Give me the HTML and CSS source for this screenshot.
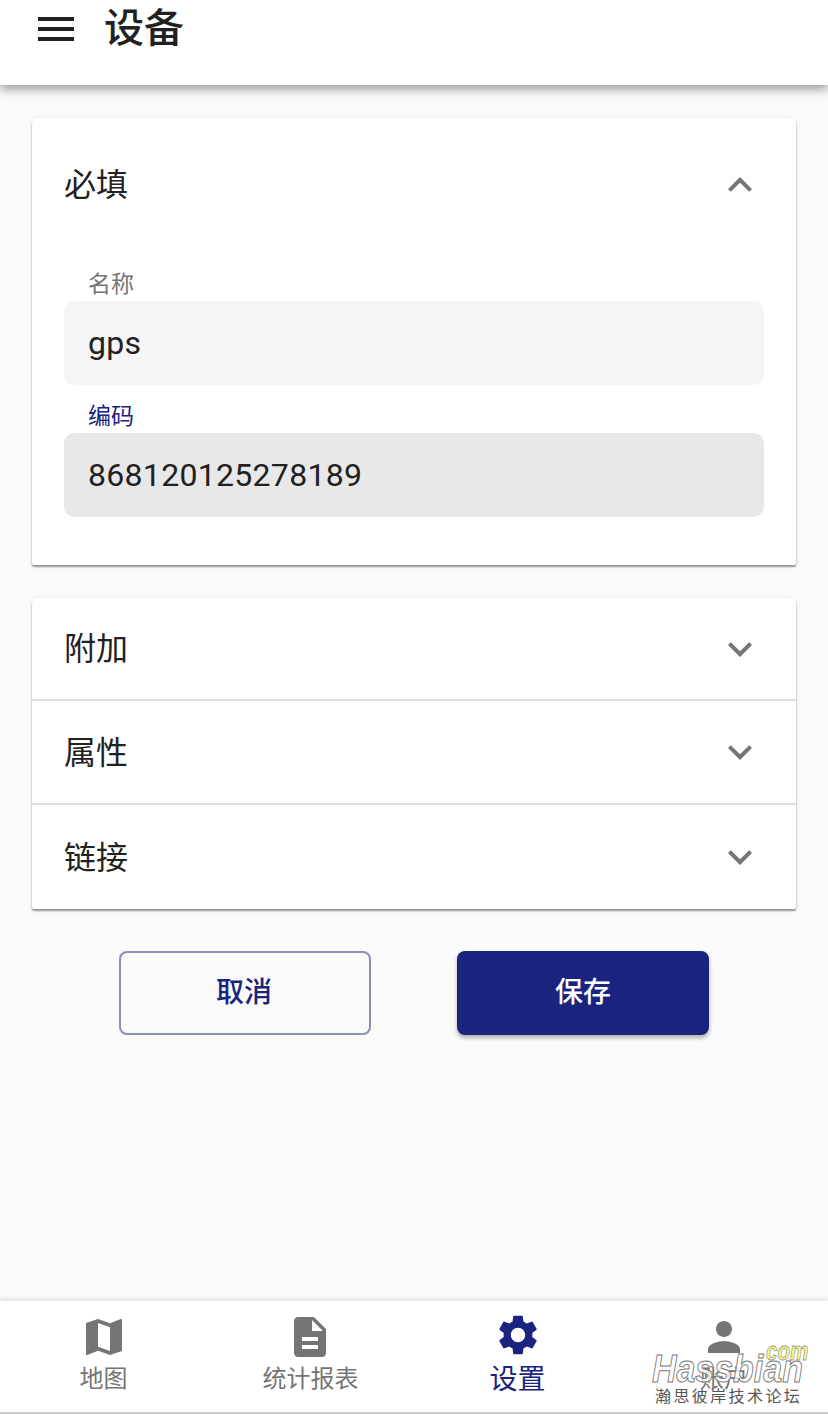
FILE: index.html
```html
<!DOCTYPE html>
<html lang="zh-CN">
<head>
    <meta charset="UTF-8">
    <meta name="viewport" content="width=device-width, initial-scale=1.0">
    <title>设备</title>
    <link rel="stylesheet" href="styles.css">
</head>
<body>
    <header class="app-bar">
        <svg class="menu-icon" viewBox="0 0 24 24"><path d="M3 18h18v-2H3v2zm0-5h18v-2H3v2zm0-7v2h18V6H3z"/></svg>
        <h1 class="page-title">设备</h1>
    </header>

    <main class="content">
        <section class="card">
            <div class="card-head">
                <span>必填</span>
                <svg class="chevron" viewBox="0 0 24 24"><path d="M12 8l-6 6 1.41 1.41L12 10.83l4.59 4.58L18 14z"/></svg>
            </div>
            <div class="card-body">
                <div class="field">
                    <label class="field-label">名称</label>
                    <div class="field-box">gps</div>
                </div>
                <div class="field field-focused">
                    <label class="field-label">编码</label>
                    <div class="field-box">868120125278189</div>
                </div>
            </div>
        </section>

        <section class="card">
            <div class="row">
                <span>附加</span>
                <svg class="chevron" viewBox="0 0 24 24"><path d="M16.59 8.59L12 13.17 7.41 8.59 6 10l6 6 6-6z"/></svg>
            </div>
            <div class="row">
                <span>属性</span>
                <svg class="chevron" viewBox="0 0 24 24"><path d="M16.59 8.59L12 13.17 7.41 8.59 6 10l6 6 6-6z"/></svg>
            </div>
            <div class="row">
                <span>链接</span>
                <svg class="chevron" viewBox="0 0 24 24"><path d="M16.59 8.59L12 13.17 7.41 8.59 6 10l6 6 6-6z"/></svg>
            </div>
        </section>

        <div class="actions">
            <button class="btn btn-cancel" type="button">取消</button>
            <button class="btn btn-save" type="button">保存</button>
        </div>
    </main>

    <nav class="bottom-nav">
        <div class="nav-item">
            <svg viewBox="0 0 24 24"><path d="M20.5 3l-.16.03L15 5.1 9 3 3.36 4.9c-.21.07-.36.25-.36.48V20.5c0 .28.22.5.5.5l.16-.03L9 18.9l6 2.1 5.64-1.9c.21-.07.36-.25.36-.48V3.5c0-.28-.22-.5-.5-.5zM15 19l-6-2.11V5l6 2.11V19z"/></svg>
            <span>地图</span>
        </div>
        <div class="nav-item">
            <svg viewBox="0 0 24 24"><path d="M14 2H6c-1.1 0-1.99.9-1.99 2L4 20c0 1.1.89 2 1.99 2H18c1.1 0 2-.9 2-2V8l-6-6zm2 16H8v-2h8v2zm0-4H8v-2h8v2zm-3-5V3.5L18.5 9H13z"/></svg>
            <span class="nav-label-wide">统计报表</span>
        </div>
        <div class="nav-item nav-active">
            <svg viewBox="0 0 24 24"><path d="M19.14 12.94c.04-.3.06-.61.06-.94 0-.32-.02-.64-.07-.94l2.03-1.58c.18-.14.23-.41.12-.61l-1.92-3.32c-.12-.22-.37-.29-.59-.22l-2.39.96c-.5-.38-1.03-.7-1.62-.94l-.36-2.54c-.04-.24-.24-.41-.48-.41h-3.84c-.24 0-.43.17-.47.41l-.36 2.54c-.59.24-1.13.57-1.62.94l-2.39-.96c-.22-.08-.47 0-.59.22L2.74 8.87c-.12.21-.08.47.12.61l2.03 1.58c-.05.3-.09.63-.09.94s.02.64.07.94l-2.03 1.58c-.18.14-.23.41-.12.61l1.92 3.32c.12.22.37.29.59.22l2.39-.96c.5.38 1.03.7 1.62.94l.36 2.54c.05.24.24.41.48.41h3.84c.24 0 .44-.17.47-.41l.36-2.54c.59-.24 1.13-.56 1.62-.94l2.39.96c.22.08.47 0 .59-.22l1.92-3.32c.12-.22.07-.47-.12-.61l-2.01-1.58zM12 15.6c-1.98 0-3.6-1.62-3.6-3.6s1.62-3.6 3.6-3.6 3.6 1.62 3.6 3.6-1.62 3.6-3.6 3.6z"/></svg>
            <span>设置</span>
        </div>
        <div class="nav-item">
            <svg viewBox="0 0 24 24"><path d="M12 12c2.21 0 4-1.79 4-4s-1.79-4-4-4-4 1.79-4 4 1.79 4 4 4zm0 2c-2.67 0-8 1.34-8 4v2h16v-2c0-2.66-5.33-4-8-4z"/></svg>
            <span>账户</span>
        </div>
    </nav>

    <div class="watermark">
        <span class="wm-com">com</span>
        <span class="wm-name">Hassbian</span>
        <span class="wm-cn">瀚思彼岸技术论坛</span>
    </div>
</body>
</html>
```

FILE: styles.css
```css
* {
    box-sizing: border-box;
}
html, body {
    margin: 0;
    height: 100%;
}
body {
    position: relative;
    display: flex;
    flex-direction: column;
    height: 1414px;
    overflow: hidden;
    background-color: #fafafa;
    color: #212121;
    font-family: Roboto, "Noto Sans CJK SC", sans-serif;
}

/* top bar */
.app-bar {
    display: flex;
    align-items: center;
    flex: none;
    height: 85px;
    padding: 5px 32px 32px;
    background-color: #fff;
    box-shadow: 0 4px 10px rgba(0, 0, 0, 0.4);
    position: relative;
    z-index: 1;
}
.menu-icon {
    width: 48px;
    height: 48px;
    fill: #212121;
}
.page-title {
    margin: 0 0 0 24px;
    font-size: 40px;
    font-weight: 500;
    line-height: 48px;
}

/* main */
.content {
    flex: 1;
    padding: 33px 32px 0;
}
.card {
    margin-bottom: 33px;
    background-color: #fff;
    border-radius: 6px 6px 2px 2px;
    box-shadow: 0 2px 2px rgba(0, 0, 0, 0.4), 0 0 4px rgba(0, 0, 0, 0.08);
}
.card-head, .row {
    display: flex;
    justify-content: space-between;
    align-items: center;
    padding: 0 32px;
    font-size: 32px;
}
.card-head span, .row span {
    margin-bottom: 5px;
}
.card-head {
    height: 132px;
}
.card-head .chevron {
    margin-top: 2px;
}
.row {
    height: 104px;
    border-bottom: 2px solid #e0e0e0;
}
.row:first-child {
    height: 103px;
}
.row:last-child {
    border-bottom: none;
}
.chevron {
    width: 48px;
    height: 48px;
    fill: #757575;
}
.card-body {
    padding: 17px 32px 48px;
}
.field + .field {
    margin-top: 14px;
}
.field-label {
    display: block;
    height: 34px;
    padding-left: 24px;
    font-size: 23px;
    line-height: 36px;
    color: #757575;
}
.field-box {
    height: 84px;
    padding: 0 24px;
    border-radius: 10px;
    background-color: #f5f5f5;
    font-size: 32px;
    letter-spacing: 0.3px;
    line-height: 84px;
}
.field-focused .field-label {
    color: #1a237e;
}
.field-focused .field-box {
    background-color: #e8e8e8;
}

/* buttons */
.actions {
    display: flex;
    justify-content: center;
    gap: 86px;
    margin-top: 42px;
}
.btn {
    width: 252px;
    height: 84px;
    padding: 0 0 6px;
    border-radius: 8px;
    font-family: inherit;
    font-size: 28px;
    font-weight: 500;
    cursor: pointer;
}
.btn-cancel {
    padding-right: 2px;
    background: transparent;
    border: 2px solid rgba(26, 35, 126, 0.5);
    color: #1a237e;
}
.btn-save {
    background-color: #1a237e;
    border: none;
    color: #fff;
    box-shadow: 0 3px 4px rgba(0, 0, 0, 0.3);
}

/* bottom nav */
.bottom-nav {
    display: grid;
    grid-template-columns: 207px 206px 209px 204px;
    flex: none;
    height: 113px;
    background-color: #fff;
    border-bottom: 2px solid #ccc;
    box-shadow: 0 -1px 6px rgba(0, 0, 0, 0.15);
}
.nav-item {
    display: flex;
    flex-direction: column;
    align-items: center;
    padding-top: 12px;
    color: #757575;
    font-size: 24px;
    line-height: 36px;
}
.nav-item svg {
    width: 48px;
    height: 48px;
    fill: #757575;
}
.nav-label-wide {
    margin-left: 1px;
}
.nav-active {
    padding-top: 10px;
    color: #1a237e;
    font-size: 28px;
    line-height: 42px;
}
.nav-active svg {
    fill: #1a237e;
}

/* forum watermark */
.watermark {
    position: absolute;
    left: 650px;
    top: 1340px;
    width: 162px;
    height: 68px;
}
.wm-com {
    position: absolute;
    left: 116px;
    top: 0;
    font: italic 700 25px/22px "Liberation Sans", sans-serif;
    color: #fcf77e;
    -webkit-text-stroke: 0.8px #999;
    transform: scaleX(0.82);
    transform-origin: left center;
}
.wm-name {
    position: absolute;
    left: 2px;
    top: 9px;
    font: italic 700 39px/40px "Liberation Sans", sans-serif;
    color: rgba(255, 255, 255, 0.8);
    -webkit-text-stroke: 1px #777;
    transform: scaleX(0.87);
    transform-origin: left center;
}
.wm-cn {
    position: absolute;
    left: 5px;
    top: 47px;
    font-size: 16px;
    line-height: 20px;
    letter-spacing: 2.4px;
    white-space: nowrap;
    color: #555;
}
```
